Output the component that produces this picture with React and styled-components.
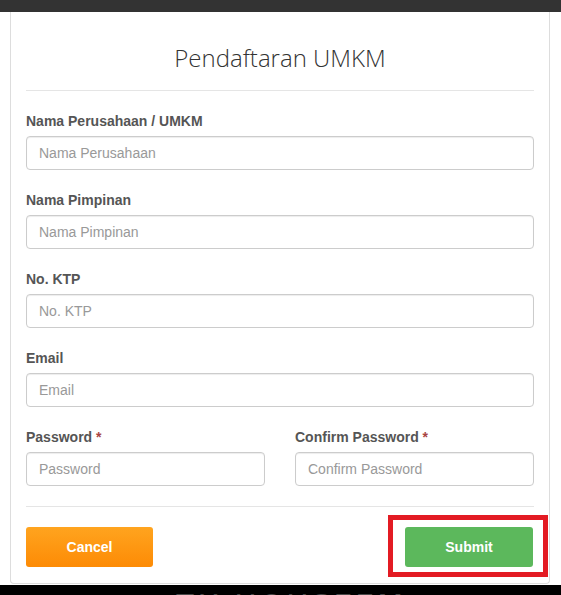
import React from 'react';
import styled, { createGlobalStyle } from 'styled-components';

const GlobalStyle = createGlobalStyle`
  html, body {
    margin: 0;
    padding: 0;
    background: #fff;
    font-family: "Liberation Sans", Arial, sans-serif;
  }
  * { box-sizing: border-box; }
`;

const Page = styled.div`
  width: 561px;
  height: 595px;
  overflow: hidden;
  display: flex;
  flex-direction: column;
`;

const TopBar = styled.div`
  height: 12px;
  background: #333;
  flex-shrink: 0;
`;

const Wrap = styled.div`
  padding: 0 11px 0 10px;
`;

const Card = styled.div`
  border: 1px solid #ddd;
  border-top: none;
  border-radius: 0 0 4px 4px;
  padding: 0 15px 16px;
  background: #fff;
`;

const Header = styled.div`
  padding: 29px 0 15px;
  border-bottom: 1px solid #e5e5e5;
  text-align: center;
`;

const Title = styled.h3`
  margin: 0;
  font-family: "Open Sans", sans-serif;
  font-weight: 300;
  font-size: 24px;
  line-height: 34px;
  color: #333;
`;

const Form = styled.div`
  padding-top: 20px;
  border-bottom: 1px solid #e5e5e5;
`;

const Row = styled.div`
  display: grid;
  grid-template-columns: 1fr 1fr;
  column-gap: 30px;
`;

const Group = styled.div`
  margin-bottom: 20px;
`;

const Label = styled.label`
  display: block;
  font-size: 14px;
  line-height: 20px;
  font-weight: bold;
  color: #555;
  margin-bottom: 5px;
`;

const Req = styled.span`
  color: #a94442;
`;

const Input = styled.input`
  display: block;
  width: 100%;
  height: 34px;
  padding: 6px 12px;
  font-family: "Liberation Sans", Arial, sans-serif;
  font-size: 14px;
  color: #555;
  border: 1px solid #ccc;
  border-radius: 4px;
  box-shadow: inset 0 1px 1px rgba(0, 0, 0, 0.075);
  outline: none;
  &::placeholder { color: #999; }
`;

const Actions = styled.div`
  display: flex;
  justify-content: space-between;
  padding-top: 20px;
`;

const Button = styled.button`
  height: 40px;
  width: ${p => p.$w}px;
  border: none;
  border-radius: 3px;
  color: #fff;
  font-family: "Liberation Sans", Arial, sans-serif;
  font-weight: bold;
  font-size: 14px;
  background: ${p => p.$bg};
`;

const Highlight = styled.div`
  position: relative;
  margin-right: 1px;
  &::after {
    content: '';
    position: absolute;
    left: -17px;
    top: -12px;
    right: -15px;
    bottom: -10px;
    border: 5px solid #e31b23;
    pointer-events: none;
  }
`;

const Footer = styled.div`
  flex: 1;
  margin-top: 1px;
  background: #000;
  overflow: hidden;
  display: flex;
  justify-content: center;
`;

const Watermark = styled.div`
  margin-top: 6px;
  margin-left: 20px;
  font-family: "DejaVu Sans", sans-serif;
  font-size: 30px;
  letter-spacing: 3px;
  color: #4a4a4a;
  line-height: 30px;
`;

const fields = [
  ['Nama Perusahaan / UMKM', 'Nama Perusahaan'],
  ['Nama Pimpinan', 'Nama Pimpinan'],
  ['No. KTP', 'No. KTP'],
  ['Email', 'Email'],
];

export default function App() {
  return (
    <Page>
      <GlobalStyle />
      <TopBar />
      <Wrap>
        <Card>
          <Header>
            <Title>Pendaftaran UMKM</Title>
          </Header>
          <Form>
            {fields.map(([label, ph]) => (
              <Group key={label}>
                <Label>{label}</Label>
                <Input placeholder={ph} />
              </Group>
            ))}
            <Row>
              <Group>
                <Label>Password <Req>*</Req></Label>
                <Input type="password" placeholder="Password" />
              </Group>
              <Group>
                <Label>Confirm Password <Req>*</Req></Label>
                <Input type="password" placeholder="Confirm Password" />
              </Group>
            </Row>
          </Form>
          <Actions>
            <Button $w={127} $bg="linear-gradient(#ffa41f, #fd8b05)">Cancel</Button>
            <Highlight>
              <Button $w={128} $bg="#5cb85c">Submit</Button>
            </Highlight>
          </Actions>
        </Card>
      </Wrap>
      <Footer>
        <Watermark>ZX-HOUSEEM</Watermark>
      </Footer>
    </Page>
  );
}
